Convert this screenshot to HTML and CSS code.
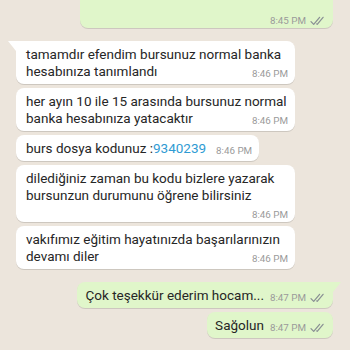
FILE: index.html
```html
<!DOCTYPE html>
<html lang="tr">
<head>
<meta charset="utf-8">
<link rel="stylesheet" href="styles.css">
</head>
<body>
<div class="chat">
  <div class="row out first">
    <div class="bubble out cut">
      <div class="text">Merhaba hocam, burs başvurum<br>Açıklama</div>
      <div class="meta solo"><span>8:45 PM</span><svg class="ticks" viewBox="0 0 14 10" width="14" height="10"><path d="M1 5.6 L3.7 8.4 L9.6 1.3 M6.7 7.9 L7.2 8.4 L13.1 1.3"/></svg></div>
    </div>
  </div>

  <div class="row in group">
    <div class="bubble in tail">
      <div class="text">tamamdır efendim bursunuz normal banka hesabınıza tanımlandı<span class="meta">8:46 PM</span></div>
    </div>
  </div>
  <div class="row in">
    <div class="bubble in">
      <div class="text">her ayın 10 ile 15 arasında bursunuz normal banka hesabınıza yatacaktır<span class="meta">8:46 PM</span></div>
    </div>
  </div>
  <div class="row in">
    <div class="bubble in">
      <div class="text">burs dosya kodunuz :<span class="link">9340239</span><span class="meta">8:46 PM</span></div>
    </div>
  </div>
  <div class="row in">
    <div class="bubble in">
      <div class="text">dilediğiniz zaman bu kodu bizlere yazarak bursunzun durumunu öğrene bilirsiniz<span class="meta">8:46 PM</span></div>
    </div>
  </div>
  <div class="row in">
    <div class="bubble in">
      <div class="text">vakıfımız eğitim hayatınızda başarılarınızın devamı diler<span class="meta">8:46 PM</span></div>
    </div>
  </div>

  <div class="row out group">
    <div class="bubble out tail">
      <div class="text">Çok teşekkür ederim hocam...<span class="meta">8:47 PM<svg class="ticks" viewBox="0 0 14 10" width="14" height="10"><path d="M1 5.6 L3.7 8.4 L9.6 1.3 M6.7 7.9 L7.2 8.4 L13.1 1.3"/></svg></span></div>
    </div>
  </div>
  <div class="row out">
    <div class="bubble out">
      <div class="text">Sağolun<span class="meta">8:47 PM<svg class="ticks" viewBox="0 0 14 10" width="14" height="10"><path d="M1 5.6 L3.7 8.4 L9.6 1.3 M6.7 7.9 L7.2 8.4 L13.1 1.3"/></svg></span></div>
    </div>
  </div>
</div>
</body>
</html>
```

FILE: styles.css
```css
html, body {
  margin: 0;
  padding: 0;
}

body {
  width: 350px;
  height: 350px;
  overflow: hidden;
  background: #ece5dc;
  font-family: Roboto, "Noto Sans", "Liberation Sans", sans-serif;
  color: #262626;
}

.chat {
  display: flex;
  flex-direction: column;
}

.row {
  display: flex;
  margin-top: 4px;
}

.row.first {
  margin-top: -38px;
}

.row.group {
  margin-top: 13px;
}

.row.in {
  justify-content: flex-start;
  padding-left: 16px;
}

.row.out {
  justify-content: flex-end;
  padding-right: 17px;
}

.bubble {
  position: relative;
  border-radius: 8px;
  padding: 5px 7px 4px 10px;
  box-shadow: 0 1px 0.6px rgba(0, 0, 0, 0.13);
}

.bubble.in {
  background: #ffffff;
  max-width: 262px;
}

.bubble.out {
  background: #e0f6ca;
  max-width: 250px;
  padding-right: 9px;
  padding-left: 8px;
}

.bubble.out.cut {
  width: 236px;
}

.bubble.in.tail {
  border-top-left-radius: 0;
}

.bubble.in.tail::before {
  content: "";
  position: absolute;
  left: -8px;
  top: 0;
  border-top: 10px solid #ffffff;
  border-left: 8px solid transparent;
}

.bubble.out.tail {
  border-top-right-radius: 0;
}

.bubble.out.tail::before {
  content: "";
  position: absolute;
  right: -8px;
  top: 0;
  border-top: 10px solid #e0f6ca;
  border-right: 8px solid transparent;
}

.text {
  display: flow-root;
  font-size: 13.5px;
  line-height: 17px;
}

.link {
  color: #2f9bd3;
}

.meta {
  float: right;
  display: flex;
  align-items: center;
  gap: 4px;
  margin: 4px 0 -3px 10px;
  font-size: 9.8px;
  line-height: 13px;
  color: #9a9a9a;
  white-space: nowrap;
}

.bubble.out .meta {
  margin-left: 6px;
}

.meta.solo,
.bubble.out .meta.solo {
  float: none;
  justify-content: flex-end;
  margin: 13px 0 -3px 0;
}

.ticks {
  display: block;
  fill: none;
  stroke: #8a9094;
  stroke-width: 1.25;
  stroke-linecap: round;
  stroke-linejoin: round;
}
```
